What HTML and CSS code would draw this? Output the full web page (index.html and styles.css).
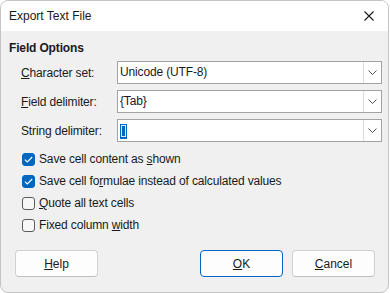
FILE: index.html
```html
<!DOCTYPE html>
<html lang="en">
<head>
  <meta charset="UTF-8">
  <title>Export Text File</title>
  <link rel="stylesheet" href="styles.css">
</head>
<body>
  <div class="dialog">
    <!-- Title bar -->
    <div class="titlebar">
      <span class="title">Export Text File</span>
      <svg class="close" width="10" height="10" viewBox="0 0 10 10">
        <path d="M0.5 0.5 L9.5 9.5 M9.5 0.5 L0.5 9.5" stroke="#1a1a1a" stroke-width="1.1" fill="none"/>
      </svg>
    </div>

    <div class="content">
      <h2 class="section-title">Field Options</h2>

      <div class="field-row">
        <label class="field-label"><u>C</u>haracter set:</label>
        <div class="combo">
          <span class="combo-text">Unicode (UTF-8)</span>
          <span class="combo-btn"><svg width="9" height="5" viewBox="0 0 9 5"><path d="M0.5 0.5 L4.5 4.5 L8.5 0.5" stroke="#555" fill="none"/></svg></span>
        </div>
      </div>

      <div class="field-row">
        <label class="field-label"><u>F</u>ield delimiter:</label>
        <div class="combo">
          <span class="combo-text">{Tab}</span>
          <span class="combo-btn"><svg width="9" height="5" viewBox="0 0 9 5"><path d="M0.5 0.5 L4.5 4.5 L8.5 0.5" stroke="#555" fill="none"/></svg></span>
        </div>
      </div>

      <div class="field-row">
        <label class="field-label">Strin<u>g</u> delimiter:</label>
        <div class="combo">
          <span class="combo-text"><span class="selection"><span class="tofu"></span></span></span>
          <span class="combo-btn"><svg width="9" height="5" viewBox="0 0 9 5"><path d="M0.5 0.5 L4.5 4.5 L8.5 0.5" stroke="#555" fill="none"/></svg></span>
        </div>
      </div>

      <div class="checks">
        <label class="check-row"><span class="box checked"><svg width="9" height="7" viewBox="0 0 9 7"><path d="M0.8 3.6 L3.3 6 L8.2 1" stroke="#fff" stroke-width="1.1" fill="none"/></svg></span><span class="check-text">Save cell content as <u>s</u>hown</span></label>
        <label class="check-row"><span class="box checked"><svg width="9" height="7" viewBox="0 0 9 7"><path d="M0.8 3.6 L3.3 6 L8.2 1" stroke="#fff" stroke-width="1.1" fill="none"/></svg></span><span class="check-text">Save cell fo<u>r</u>mulae instead of calculated values</span></label>
        <label class="check-row"><span class="box"></span><span class="check-text"><u>Q</u>uote all text cells</span></label>
        <label class="check-row"><span class="box"></span><span class="check-text">Fixed column <u>w</u>idth</span></label>
      </div>
    </div>

    <!-- Buttons -->
    <div class="button-bar">
      <button class="btn"><u>H</u>elp</button>
      <span class="spacer"></span>
      <button class="btn btn-default"><u>O</u>K</button>
      <button class="btn"><u>C</u>ancel</button>
    </div>
  </div>
</body>
</html>
```

FILE: styles.css
```css
:root {
  --dialog-bg: #f0f0f0;
  --border-gray: #c4c4c4;
  --field-border: #a2a2a2;
  --accent-blue: #0067c0;
  --text: #1a1a1a;
}

body, html {
  margin: 0;
  padding: 0;
  background: #ffffff;
  font-family: 'Liberation Sans', Arial, sans-serif;
  font-size: 12px;
  color: var(--text);
}

/* Dialog window */
.dialog {
  width: 389px;
  height: 293px;
  box-sizing: border-box;
  border: 1px solid var(--border-gray);
  border-radius: 8px;
  background: var(--dialog-bg);
  overflow: hidden;
  display: flex;
  flex-direction: column;
}

.titlebar {
  height: 30px;
  flex-shrink: 0;
  background: #ffffff;
  display: flex;
  align-items: center;
  padding: 0 14px 0 8px;
}

.title {
  flex: 1;
  padding-bottom: 1px;
}

.close {
  display: block;
}

/* Content */
.content {
  padding: 9px 6px 0 8px;
  letter-spacing: -0.15px;
}

.section-title {
  margin: 0 0 5px 0;
  font-size: 12px;
  font-weight: bold;
  line-height: 16px;
}

.field-row {
  display: flex;
  align-items: center;
  height: 23px;
  margin-bottom: 6px;
  padding-left: 12px;
}

.field-label {
  width: 96px;
  flex-shrink: 0;
}

.combo {
  flex: 1;
  height: 23px;
  box-sizing: border-box;
  border: 1px solid var(--field-border);
  background: #ffffff;
  display: flex;
}

.combo-text {
  flex: 1;
  padding-left: 2px;
  line-height: 21px;
  display: flex;
  align-items: center;
}

.combo-btn {
  width: 17px;
  border-left: 1px solid #dcdcdc;
  display: flex;
  align-items: center;
  justify-content: center;
}

.selection {
  display: inline-flex;
  align-items: center;
  justify-content: center;
  width: 7px;
  height: 15px;
  margin-top: 1px;
  background: var(--accent-blue);
}

.tofu {
  width: 3px;
  height: 10px;
  border: 1px solid #d8e8ff;
}

/* Checkboxes */
.checks {
  display: flex;
  flex-direction: column;
  padding-left: 13px;
  margin-top: 1px;
}

.check-row {
  display: flex;
  align-items: center;
  height: 22px;
}

.check-text {
  white-space: pre;
}

.box {
  width: 13px;
  height: 13px;
  box-sizing: border-box;
  border: 1px solid #5c5c5c;
  border-radius: 3px;
  background: #f7f7f7;
  margin-right: 4px;
  display: flex;
  align-items: center;
  justify-content: center;
}

.box.checked {
  background: var(--accent-blue);
  border-color: var(--accent-blue);
}

/* Buttons */
.button-bar {
  display: flex;
  gap: 9px;
  padding: 14px 13px 0 14px;
}

.spacer {
  flex: 1;
}

.btn {
  width: 83px;
  height: 27px;
  box-sizing: border-box;
  border: 1px solid #d0d0d0;
  border-bottom-color: #c0c0c0;
  border-radius: 4px;
  background: #fdfdfd;
  font-family: inherit;
  font-size: 12px;
  color: var(--text);
  padding: 0;
}

.btn-default {
  border-color: var(--accent-blue);
}
```
